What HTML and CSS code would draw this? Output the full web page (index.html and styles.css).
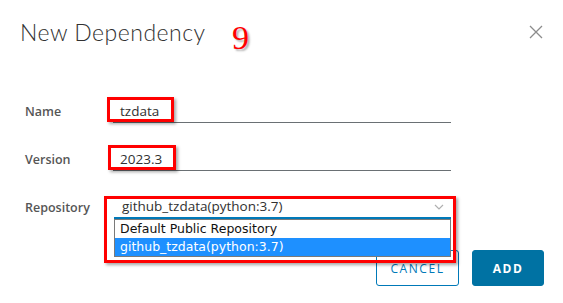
FILE: index.html
```html
<!DOCTYPE html>
<html lang="en">
<head>
    <meta charset="UTF-8">
    <meta name="viewport" content="width=device-width, initial-scale=1.0">
    <title>New Dependency</title>
    <link rel="stylesheet" href="styles.css">
</head>
<body>
    <div class="modal">
        <div class="modal-header">
            <h3 class="modal-title">New Dependency</h3>
            <button class="close" aria-label="Close">
                <svg width="14" height="14" viewBox="0 0 14 14"><path d="M1 1 L13 13 M13 1 L1 13" stroke="#8c8c8c" stroke-width="1.3" fill="none"/></svg>
            </button>
        </div>

        <form class="dep-form">
            <div class="form-row">
                <label>Name</label>
                <div class="input">tzdata</div>
            </div>
            <div class="form-row">
                <label>Version</label>
                <div class="input">2023.3</div>
            </div>
            <div class="form-row">
                <label>Repository</label>
                <div class="select">
                    <span>github_tzdata(python:3.7)</span>
                    <svg class="chevron" width="10" height="6" viewBox="0 0 10 6"><path d="M1 1 L5 5 L9 1" stroke="#b0b0b0" stroke-width="1.2" fill="none"/></svg>
                    <!-- open dropdown list -->
                    <ul class="options">
                        <li>Default Public Repository</li>
                        <li class="selected">github_tzdata(python:3.7)</li>
                    </ul>
                </div>
            </div>
        </form>

        <div class="modal-footer">
            <button class="btn btn-outline">CANCEL</button>
            <button class="btn btn-primary">ADD</button>
        </div>

        <!-- annotation marks -->
        <span class="step">9</span>
        <div class="mark mark-name"></div>
        <div class="mark mark-version"></div>
        <div class="mark mark-repo"></div>
    </div>
</body>
</html>
```

FILE: styles.css
```css
body {
    margin: 0;
    background: #fff;
    font-family: "Open Sans", "Noto Sans", sans-serif;
}

.modal {
    position: relative;
    width: 563px;
    height: 303px;
    overflow: hidden;
}

/* Header */
.modal-header {
    display: flex;
    justify-content: space-between;
    align-items: flex-start;
    padding: 17px 20px 0 20px;
}
.modal-title {
    margin: 0;
    font-family: "Lato", sans-serif;
    font-size: 23px;
    font-weight: 300;
    letter-spacing: 0.5px;
    color: #313131;
    line-height: 30px;
}
.close {
    border: none;
    background: none;
    padding: 0;
    margin-top: 8px;
    width: 14px;
    height: 14px;
    cursor: pointer;
}

/* Form */
.dep-form {
    padding: 0 0 0 25px;
    margin-top: 52px;
}
.form-row {
    display: grid;
    grid-template-columns: 88px 338px;
    align-items: center;
    height: 24px;
    margin-bottom: 24px;
}
.form-row:last-child {
    margin-bottom: 0;
}
.form-row label {
    font-size: 12.5px;
    font-weight: 600;
    color: #565656;
}
.input {
    height: 23px;
    line-height: 24px;
    padding-left: 7px;
    border-bottom: 1px solid #6a7074;
    font-size: 13.5px;
    color: #313131;
}
.select {
    position: relative;
    height: 22px;
    line-height: 22px;
    padding-left: 8px;
    border-bottom: 2px solid #0079b8;
    font-size: 13.5px;
    color: #313131;
    margin-left: 1px;
}
.chevron {
    position: absolute;
    right: 7px;
    top: 9px;
}
.options {
    position: absolute;
    left: 0;
    top: 24px;
    width: 335px;
    margin: 0;
    padding: 0;
    list-style: none;
    background: #fff;
    border: 1px solid #7a7a7a;
    font-family: "DejaVu Sans", sans-serif;
    font-size: 12.5px;
    line-height: 18px;
    z-index: 2;
}
.options li {
    padding-left: 5px;
    color: #111;
}
.options li.selected {
    background: #1e90ff;
    color: #fff;
}

/* Footer */
.modal-footer {
    display: flex;
    justify-content: flex-end;
    gap: 13px;
    padding-right: 19px;
    margin-top: 31px;
}
.btn {
    height: 36px;
    padding: 0 10px;
    border-radius: 3px;
    font-family: "Open Sans", "Noto Sans", sans-serif;
    font-size: 12px;
    font-weight: 700;
    letter-spacing: 0.13em;
    cursor: pointer;
}
.btn-outline {
    width: 83px;
    background: #fff;
    color: #0079b8;
    border: 1px solid #0079b8;
    font-weight: 500;
}
.btn-primary {
    width: 72px;
    background: #0072a3;
    color: #fff;
    border: 1px solid #0072a3;
}

/* Annotations */
.step {
    position: absolute;
    left: 232px;
    top: 19px;
    font-family: "Liberation Serif", serif;
    font-size: 34px;
    color: #ff0000;
    text-shadow: 2px 2px 2px rgba(0, 0, 0, 0.3);
}
.mark {
    position: absolute;
    border: 3px solid #ff0000;
    box-shadow: 2px 2px 3px rgba(0, 0, 0, 0.35);
    z-index: 3;
}
.mark-name {
    left: 107px;
    top: 97px;
    width: 61px;
    height: 19px;
}
.mark-version {
    left: 108px;
    top: 145px;
    width: 62px;
    height: 19px;
}
.mark-repo {
    left: 104px;
    top: 196px;
    width: 346px;
    height: 61px;
}
```
